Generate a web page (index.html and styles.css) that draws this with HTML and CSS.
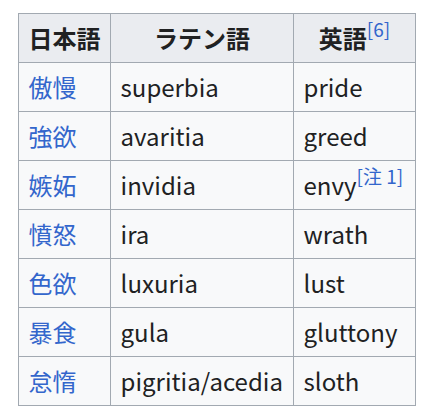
FILE: index.html
```html
<!DOCTYPE html>
<html lang="ja">
<head>
<meta charset="utf-8">
<link rel="stylesheet" href="styles.css">
</head>
<body>
<table class="wikitable">
  <thead>
    <tr>
      <th class="c1">日本語</th>
      <th class="c2">ラテン語</th>
      <th class="c3">英語<sup class="ref">[6]</sup></th>
    </tr>
  </thead>
  <tbody>
    <tr><td><a href="#">傲慢</a></td><td>superbia</td><td>pride</td></tr>
    <tr><td><a href="#">強欲</a></td><td>avaritia</td><td>greed</td></tr>
    <tr><td><a href="#">嫉妬</a></td><td>invidia</td><td>envy<sup class="ref">[注 1]</sup></td></tr>
    <tr><td><a href="#">憤怒</a></td><td>ira</td><td>wrath</td></tr>
    <tr><td><a href="#">色欲</a></td><td>luxuria</td><td>lust</td></tr>
    <tr><td><a href="#">暴食</a></td><td>gula</td><td>gluttony</td></tr>
    <tr><td><a href="#">怠惰</a></td><td>pigritia/acedia</td><td>sloth</td></tr>
  </tbody>
</table>
</body>
</html>
```
FILE: styles.css
```css
html, body {
  margin: 0;
  padding: 0;
  background: #ffffff;
}
body {
  font-family: "Noto Sans CJK JP", "Noto Sans", sans-serif;
  font-size: 24px;
  color: #202122;
}
.wikitable {
  margin: 13px 0 0 18px;
  border-collapse: collapse;
  border: 1px solid #a2a9b1;
  background: #f8f9fa;
  table-layout: fixed;
  width: 398px;
}
.wikitable th,
.wikitable td {
  border: 1px solid #a2a9b1;
  padding: 4.8px 9.6px;
  line-height: 38.4px;
  text-align: left;
  vertical-align: middle;
  white-space: nowrap;
}
.wikitable th {
  background: #eaecf0;
  font-weight: bold;
  text-align: center;
}
.c1 { width: 71.8px; }
.c2 { width: 162.8px; }
.c3 { width: 101.8px; }
.wikitable a {
  color: #3366cc;
  text-decoration: none;
}
.ref {
  font-size: 19px;
  font-weight: normal;
  color: #3366cc;
  line-height: 1;
  vertical-align: 11px;
}
```
